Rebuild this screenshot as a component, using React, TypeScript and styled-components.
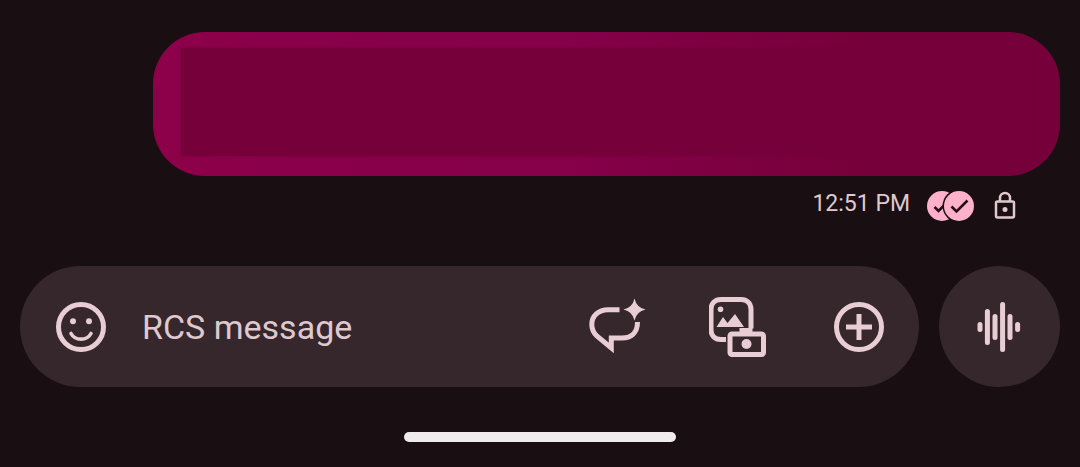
import React from "react";
import styled, { createGlobalStyle } from "styled-components";

const GlobalStyle = createGlobalStyle`
  *, *::before, *::after { box-sizing: border-box; }
  html, body { margin: 0; background: #190e12; }
  body { font-family: Roboto, "Noto Sans", sans-serif; color: #dfc9ce; }
`;

const Screen = styled.main`
  display: flex;
  flex-direction: column;
  min-height: 100vh;
  padding: 32px 20px 25px;
  background: #190e12;
`;

const Bubble = styled.article`
  display: flex;
  height: 144px;
  margin-left: 133px;
  padding: 16px 28px 20px;
  border-radius: 52px;
  background: linear-gradient(90deg, #8d004a 0%, #86004a 45%, #760039 80%, #760039 100%);
`;

const Redaction = styled.div`
  flex: 1;
  background: #75003a;
  box-shadow: 0 0 3px #75003a;
`;

const Status = styled.footer`
  display: flex;
  align-items: center;
  justify-content: flex-end;
  height: 32px;
  margin-top: 14px;
  padding-right: 43px;
`;

const Time = styled.time`
  margin-right: 16px;
  padding-bottom: 4px;
  font-size: 23px;
  line-height: 28px;
`;

const Glyph = styled.svg<{ $space?: number }>`
  display: block;
  flex: none;
  margin-left: ${(p) => p.$space ?? 0}px;
`;

const Composer = styled.form`
  display: flex;
  gap: 20px;
  margin-top: 44px;
`;

const Field = styled.div`
  display: flex;
  flex: 1;
  min-width: 0;
  align-items: center;
  height: 121px;
  padding: 0 30px 0 31px;
  border-radius: 61px;
  background: #36272c;
`;

const MessageInput = styled.input`
  flex: 1;
  min-width: 0;
  height: 60px;
  margin: 0 31px;
  padding: 0;
  border: 0;
  outline: 0;
  background: transparent;
  color: #dfc9ce;
  font: 34px/44px Roboto, "Noto Sans", sans-serif;
  &::placeholder { color: #dfc9ce; opacity: 1; }
`;

const Actions = styled.div`
  display: flex;
  gap: 60px;
`;

const IconButton = styled.button`
  display: flex;
  flex: none;
  padding: 0;
  border: 0;
  background: transparent;
  color: #e8ced4;
  cursor: pointer;
`;

const VoiceButton = styled(IconButton)`
  align-items: center;
  justify-content: center;
  width: 121px;
  height: 121px;
  border-radius: 50%;
  background: #36272c;
`;

const HomeHandle = styled.div`
  width: 272px;
  height: 10px;
  margin: 45px auto 0;
  border-radius: 5px;
  background: #efebec;
`;

const Icon = ({ children }: { children: React.ReactNode }) => (
  <Glyph width="60" height="60" viewBox="0 0 60 60" fill="none" stroke="currentColor" strokeWidth="5" aria-hidden="true">
    {children}
  </Glyph>
);

const bars = [
  [10, 25, 35],
  [17.4, 12, 48],
  [25, 17, 43],
  [32.6, 5, 55],
  [40, 17, 43],
  [47.6, 25, 35],
];

export default function App() {
  return (
    <>
      <GlobalStyle />
      <Screen>
        <Bubble aria-label="Sent message">
          <Redaction />
        </Bubble>
        <Status>
          <Time>12:51 PM</Time>
          <Glyph width="48" height="32" viewBox="0 0 48 32" fill="none" role="img" aria-label="Read">
            <circle cx="16" cy="16" r="15" fill="#ffb0cb" />
            <path d="M8.500 17l4 4 9-9" stroke="#2b0d19" strokeWidth="2.6" />
            <circle cx="33" cy="16" r="16.5" fill="#190e12" />
            <circle cx="33" cy="16" r="15" fill="#ffb0cb" />
            <path d="M25.5 16.5l5 5L41.5 10.5" stroke="#2b0d19" strokeWidth="2.6" />
          </Glyph>
          <Glyph $space={19} width="24" height="32" viewBox="0 0 24 32" fill="none" stroke="#dfc9ce" strokeWidth="2.5" role="img" aria-label="Encrypted">
            <rect x="3" y="11.5" width="18" height="16" rx="1.5" />
            <path d="M7 11.5V8a5 5 0 0 1 10 0v3.5" />
            <circle cx="12" cy="19.5" r="2.5" fill="#dfc9ce" stroke="none" />
          </Glyph>
        </Status>
        <Composer onSubmit={(e) => e.preventDefault()}>
          <Field>
            <IconButton type="button" aria-label="Emoji">
              <Icon>
                <circle cx="30" cy="30" r="22.5" />
                <g fill="currentColor" stroke="none">
                  <circle cx="22" cy="24.3" r="3" />
                  <circle cx="38" cy="24.3" r="3" />
                </g>
                <path d="M20 36.5c4 7.5 16 7.5 20 0" strokeWidth="3.6" strokeLinecap="round" />
              </Icon>
            </IconButton>
            <MessageInput type="text" aria-label="RCS message" placeholder="RCS message" />
            <Actions>
              <IconButton type="button" aria-label="Magic compose">
                <Icon>
                  <path d="M30.5 12.8H19C9.5 12.8 2.8 19 2.8 27.5c0 5.5 2 8.5 5 11.5L22.3 51V41H33c9 0 15.5-5 15.5-16" />
                  <path d="M45.5 1.5Q47.5 10.5 56.5 12.5 47.5 14.5 45.5 23.5 43.5 14.5 34.5 12.5 43.5 10.5 45.5 1.5Z" fill="currentColor" stroke="none" />
                </Icon>
              </IconButton>
              <IconButton type="button" aria-label="Gallery and camera">
                <Icon>
                  <g transform="translate(-0.5 0)">
                    <path d="M17.5 42.5h-5c-6.5 0-10-4-10-10v-20c0-6 4-10 10-10h20c6 0 10 4 10 10v19" />
                    <path d="M8 30l6.5-10 4.5 6 7.5-9L35.500 30Z" fill="currentColor" stroke="none" />
                    <circle cx="12" cy="12.3" r="2.8" fill="currentColor" stroke="none" />
                    <path d="M31 36v-5h13v5z" fill="currentColor" stroke="none" />
                    <rect x="21.5" y="37" width="33.5" height="20.5" rx="2" />
                    <circle cx="38" cy="47" r="5" fill="currentColor" stroke="none" />
                  </g>
                </Icon>
              </IconButton>
              <IconButton type="button" aria-label="Add attachment">
                <Icon>
                  <circle cx="30" cy="30" r="22.5" />
                  <path d="M17 30h26M30 17v26" />
                </Icon>
              </IconButton>
            </Actions>
          </Field>
          <VoiceButton type="button" aria-label="Record voice message">
            <Icon>
              {bars.map(([x, top, bottom]) => (
                <rect key={x} x={x - 2.5} y={top} width="5" height={bottom - top} rx="2.5" fill="currentColor" stroke="none" />
              ))}
            </Icon>
          </VoiceButton>
        </Composer>
        <HomeHandle />
      </Screen>
    </>
  );
}
